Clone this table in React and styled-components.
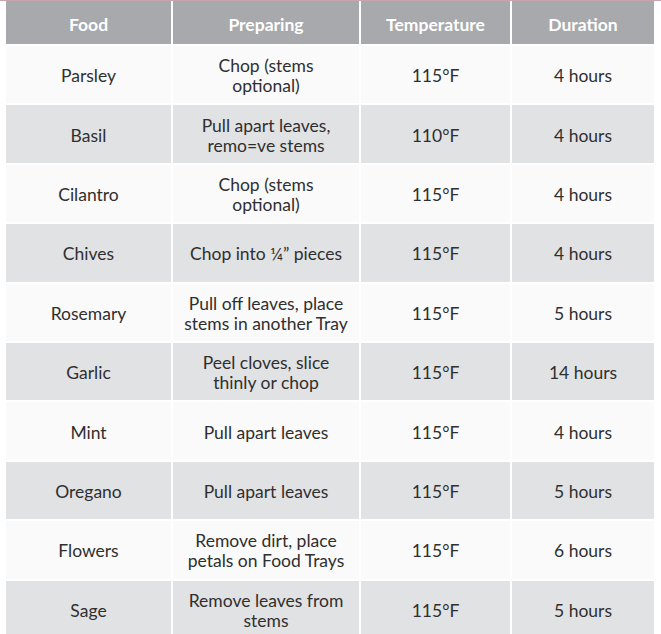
import React from 'react';
import styled, { createGlobalStyle } from 'styled-components';

const GlobalStyle = createGlobalStyle`
  html, body {
    margin: 0;
    padding: 0;
    background: #ffffff;
  }
  body {
    font-family: Lato, 'Open Sans', sans-serif;
  }
`;

const Page = styled.div`
  width: 661px;
  height: 634px;
  overflow: hidden;
  border-top: 1px solid #c9a4ad;
  box-sizing: border-box;
`;

const Grid = styled.div`
  display: grid;
  grid-template-columns: 165px 186px 149px 142px;
  column-gap: 2px;
  row-gap: 2px;
  padding-left: 6px;
`;

const HeadCell = styled.div`
  height: 43px;
  padding-top: 4px;
  box-sizing: border-box;
  background: #a7a9ac;
  color: #ffffff;
  font-weight: 700;
  font-size: 17.5px;
  display: flex;
  align-items: center;
  justify-content: center;
  text-align: center;
`;

const Cell = styled.div`
  height: 57.4px;
  padding-top: 3px;
  box-sizing: border-box;
  background: ${(p) => (p.$shade ? '#e1e2e4' : '#fafafa')};
  color: #2f2f2f;
  font-size: 17.5px;
  line-height: 20px;
  display: flex;
  flex-direction: column;
  align-items: center;
  justify-content: center;
  text-align: center;
  white-space: nowrap;
`;

const Line = styled.span`
  display: block;
`;

const headers = ['Food', 'Preparing', 'Temperature', 'Duration'];

// preparing column keeps the reference's line breaks
const rows = [
  ['Parsley', ['Chop (stems', 'optional)'], '115°F', '4 hours'],
  ['Basil', ['Pull apart leaves,', 'remo=ve stems'], '110°F', '4 hours'],
  ['Cilantro', ['Chop (stems', 'optional)'], '115°F', '4 hours'],
  ['Chives', ['Chop into ¼” pieces'], '115°F', '4 hours'],
  ['Rosemary', ['Pull off leaves, place', 'stems in another Tray'], '115°F', '5 hours'],
  ['Garlic', ['Peel cloves, slice', 'thinly or chop'], '115°F', '14 hours'],
  ['Mint', ['Pull apart leaves'], '115°F', '4 hours'],
  ['Oregano', ['Pull apart leaves'], '115°F', '5 hours'],
  ['Flowers', ['Remove dirt, place', 'petals on Food Trays'], '115°F', '6 hours'],
  ['Sage', ['Remove leaves from', 'stems'], '115°F', '5 hours'],
];

export default function App() {
  return (
    <Page>
      <GlobalStyle />
      <Grid>
        {headers.map((h) => (
          <HeadCell key={h}>{h}</HeadCell>
        ))}
        {rows.map(([food, prep, temp, dur], i) => (
          <React.Fragment key={food}>
            <Cell $shade={i % 2 === 1}>{food}</Cell>
            <Cell $shade={i % 2 === 1}>
              {prep.map((l) => (
                <Line key={l}>{l}</Line>
              ))}
            </Cell>
            <Cell $shade={i % 2 === 1}>{temp}</Cell>
            <Cell $shade={i % 2 === 1}>{dur}</Cell>
          </React.Fragment>
        ))}
      </Grid>
    </Page>
  );
}
